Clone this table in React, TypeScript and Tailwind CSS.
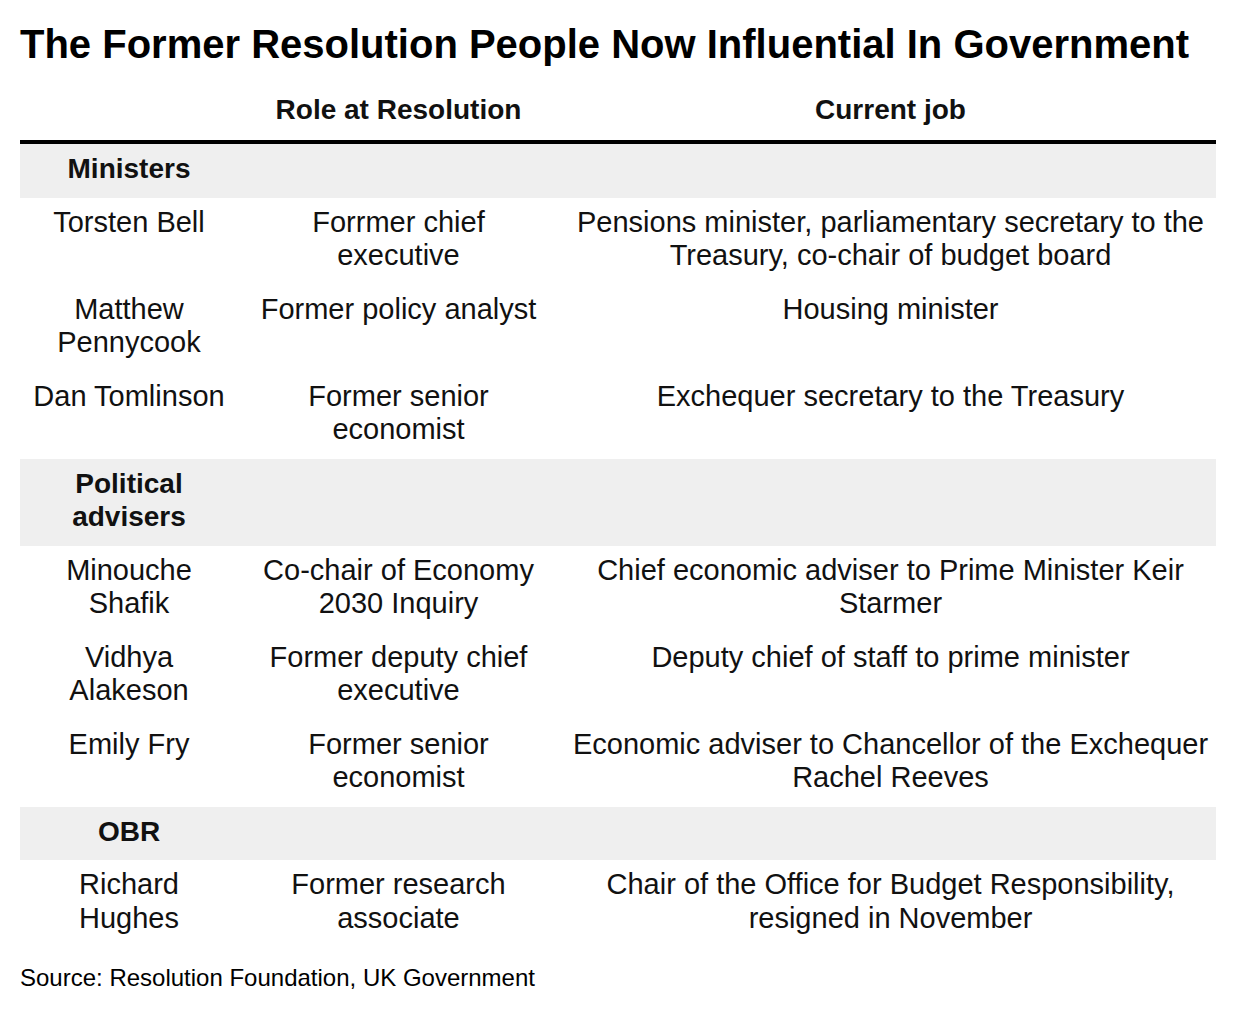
type Person = { name: string; role: string; job: string };
type Group = { label: string; people: Person[] };

const GROUPS: Group[] = [
  {
    label: 'Ministers',
    people: [
      {
        name: 'Torsten Bell',
        role: 'Forrmer chief executive',
        job: 'Pensions minister, parliamentary secretary to the Treasury, co-chair of budget board',
      },
      { name: 'Matthew Pennycook', role: 'Former policy analyst', job: 'Housing minister' },
      { name: 'Dan Tomlinson', role: 'Former senior economist', job: 'Exchequer secretary to the Treasury' },
    ],
  },
  {
    label: 'Political advisers',
    people: [
      {
        name: 'Minouche Shafik',
        role: 'Co-chair of Economy 2030 Inquiry',
        job: 'Chief economic adviser to Prime Minister Keir Starmer',
      },
      {
        name: 'Vidhya Alakeson',
        role: 'Former deputy chief executive',
        job: 'Deputy chief of staff to prime minister',
      },
      {
        name: 'Emily Fry',
        role: 'Former senior economist',
        job: 'Economic adviser to Chancellor of the Exchequer Rachel Reeves',
      },
    ],
  },
  {
    label: 'OBR',
    people: [
      {
        name: 'Richard Hughes',
        role: 'Former research associate',
        job: 'Chair of the Office for Budget Responsibility, resigned in November',
      },
    ],
  },
];

// column widths: 218 / 321 / 657 → table spans x=20..1216
const ROW = 'grid grid-cols-[218px_321px_657px] text-center';

function GroupRow({ label }: { label: string }) {
  return (
    <div className={`${ROW} bg-[#efefef]`}>
      <div className="px-2 pt-[8px] pb-[12px] text-[28px] leading-[33.5px] font-bold">{label}</div>
      <div />
      <div />
    </div>
  );
}

function PersonRow({ p }: { p: Person }) {
  return (
    <div className={`${ROW} text-[29px] leading-[33.5px]`}>
      <div className="px-2 pt-[8px] pb-[12px]">{p.name}</div>
      <div className="px-4 pt-[8px] pb-[12px]">{p.role}</div>
      <div className="pl-[6px] pt-[8px] pb-[12px]">{p.job}</div>
    </div>
  );
}

export default function App() {
  return (
    <div
      className="min-h-screen bg-white px-5 pt-5 text-[#111]"
      style={{ fontFamily: '"Liberation Sans", Arial, sans-serif' }}
    >
      <h1 className="text-[40px] leading-[48px] font-bold text-black">
        The Former Resolution People Now Influential In Government
      </h1>

      {/* Header */}
      <div className={`${ROW} mt-[25px] pb-[14px] border-b-4 border-black text-[28px] leading-[33px] font-bold`}>
        <div />
        <div>Role at Resolution</div>
        <div className="pl-[6px]">Current job</div>
      </div>

      {GROUPS.map((g) => (
        <div key={g.label}>
          <GroupRow label={g.label} />
          {g.people.map((p) => (
            <PersonRow key={p.name} p={p} />
          ))}
        </div>
      ))}

      <p className="mt-[17px] text-[24px] leading-[28px] text-black">
        Source: Resolution Foundation, UK Government
      </p>
    </div>
  );
}
